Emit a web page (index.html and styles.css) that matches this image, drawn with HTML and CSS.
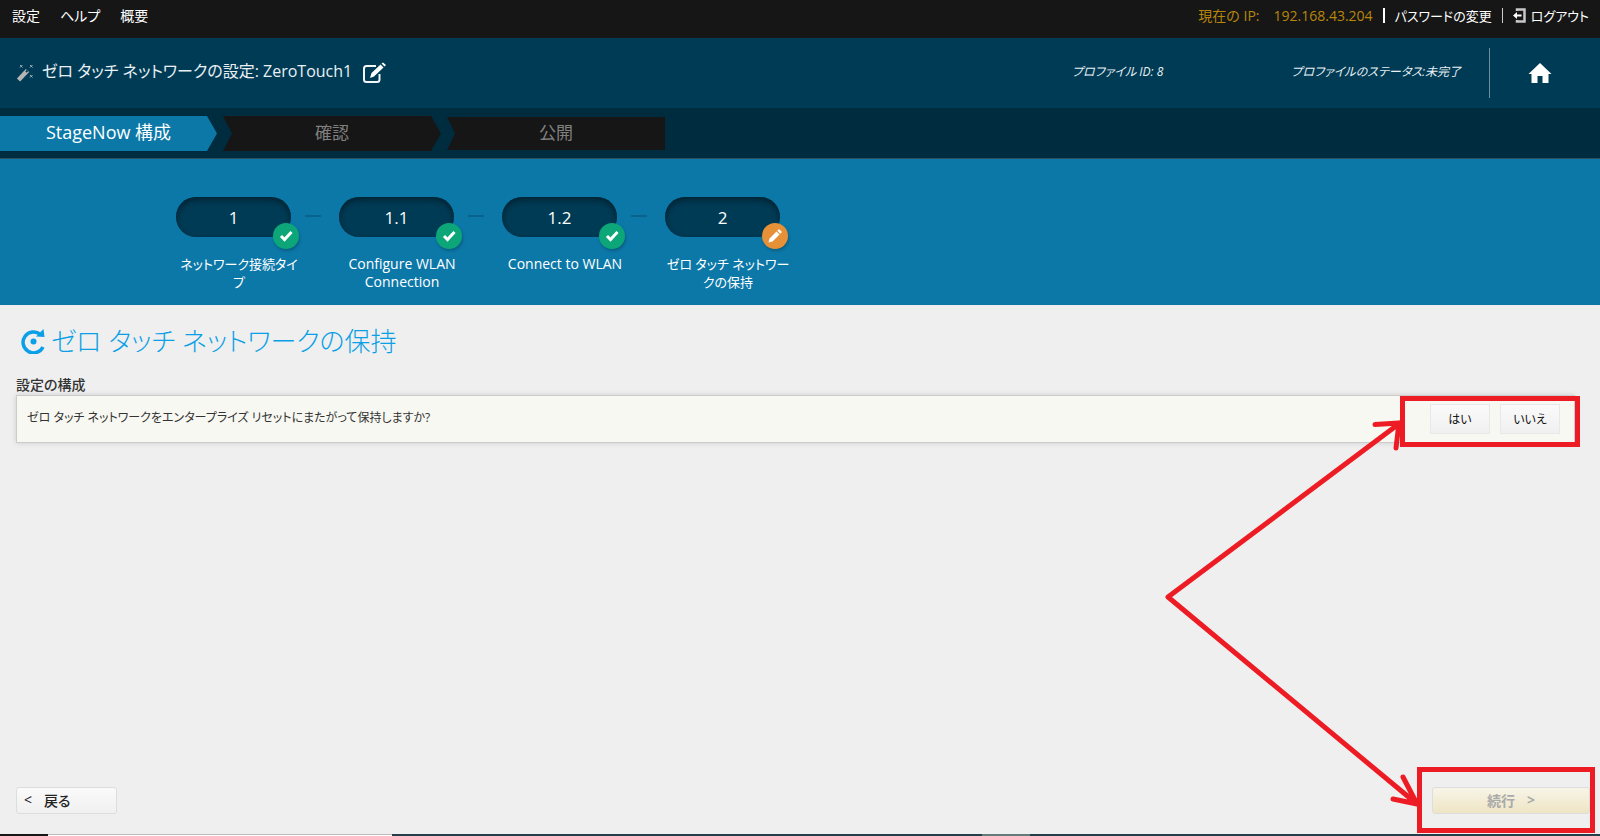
FILE: index.html
```html
<!DOCTYPE html>
<html lang="ja">
<head>
<meta charset="utf-8">
<title>StageNow</title>
<link rel="stylesheet" href="styles.css">
</head>
<body>
<header class="topbar">
  <nav class="menu">
    <a href="#">設定</a>
    <a href="#">ヘルプ</a>
    <a href="#">概要</a>
  </nav>
  <div class="session">
    <span class="ip-label">現在の IP:</span>
    <span class="ip">192.168.43.204</span>
    <span class="bar bar-bold"></span>
    <a class="session-link" href="#">パスワードの変更</a>
    <span class="bar"></span>
    <a href="#" class="session-link logout">
      <svg width="13" height="15" viewBox="0 0 13 15" aria-hidden="true"><path d="M4 3V1.500H11.500V13.500H4V12" fill="none" stroke="#c8c8c8" stroke-width="2.500"/><path d="M0 7.500L4 4V6.500H8.500V8.500H4V11Z" fill="#fff"/></svg>
      <span>ログアウト</span>
    </a>
  </div>
</header>

<section class="profile">
  <h1 class="profile-name">
    <svg class="wand" width="18" height="18" viewBox="0 0 18 18" aria-hidden="true"><path d="M2.500 16L11.500 6.500" stroke="#b5b5b5" stroke-width="4.500" stroke-linecap="butt"/><path d="M10 8L11.500 6.500" stroke="#003b55" stroke-width="2"/><path d="M4 1l2.500 2.500m0-2.500L4 3.500M14 1l2.500 2.500m0-2.500l-2.500 2.500M14 11l2.500 2.500m0-2.500l-2.500 2.500" stroke="#a3b3bb" stroke-width="1"/></svg>
    <span>ゼロ タッチ ネットワークの設定: ZeroTouch1</span>
  </h1>
  <button class="icon-button" type="button" aria-label="名前の編集">
    <svg width="24" height="22" viewBox="0 0 24 22" aria-hidden="true"><path d="M14 4H4.500Q2 4 2 6.500V17.500Q2 20 4.500 20H15Q17.500 20 17.500 17.500V12" fill="none" stroke="#f2f6f8" stroke-width="2"/><path d="M8 16L9.500 11L18.500 2.500L21.500 5.500L12 14.500Z" fill="#fff"/><path d="M19.500 1.500L21 0.500L24 3L22.500 4.500Z" fill="#fff"/></svg>
  </button>
  <span class="profile-id">プロファイル ID: 8</span>
  <span class="profile-status">プロファイルのステータス:未完了</span>
  <a class="home" href="#" aria-label="ホーム">
    <svg width="24" height="22" viewBox="0 0 24 22" aria-hidden="true"><path d="M12 1L23.500 12H20.500V21H14.500V14H9.500V21H3.500V12H0.500Z" fill="#fff"/></svg>
  </a>
</section>

<nav class="stages">
  <a class="stage stage-active" href="#">StageNow 構成</a>
  <a class="stage stage-mid" href="#">確認</a>
  <a class="stage stage-last" href="#">公開</a>
</nav>

<ol class="steps">
  <li class="step">
    <button class="pill" type="button">1</button>
    <span class="badge"><svg width="14" height="12" viewBox="0 0 14 12" aria-hidden="true"><path d="M2 6L5.500 9.500L12.500 2" fill="none" stroke="#fff" stroke-width="3"/></svg></span>
    <span class="step-label">ネットワーク接続タイプ</span>
  </li>
  <li class="step">
    <button class="pill" type="button">1.1</button>
    <span class="badge"><svg width="14" height="12" viewBox="0 0 14 12" aria-hidden="true"><path d="M2 6L5.500 9.500L12.500 2" fill="none" stroke="#fff" stroke-width="3"/></svg></span>
    <span class="step-label step-label-latin">Configure WLAN Connection</span>
  </li>
  <li class="step">
    <button class="pill" type="button">1.2</button>
    <span class="badge"><svg width="14" height="12" viewBox="0 0 14 12" aria-hidden="true"><path d="M2 6L5.500 9.500L12.500 2" fill="none" stroke="#fff" stroke-width="3"/></svg></span>
    <span class="step-label step-label-latin">Connect to WLAN</span>
  </li>
  <li class="step">
    <button class="pill" type="button">2</button>
    <span class="badge badge-edit"><svg width="14" height="14" viewBox="0 0 14 14" aria-hidden="true"><path d="M0.500 13.500L1.500 9.500L8.500 2.500L11.500 5.500L4.500 12.500Z M9.300 1.700L10.500 0.500Q11 0 11.500 0.500L13.500 2.500Q14 3 13.500 3.500L12.300 4.700Z" fill="#fff"/></svg></span>
    <span class="step-label">ゼロ タッチ ネットワークの保持</span>
  </li>
</ol>

<main class="content">
  <h2 class="title">
    <svg width="26" height="26" viewBox="0 0 26 26" aria-hidden="true"><path d="M20.500 6.500A10.500 10.500 0 1 0 23 19" fill="none" stroke="#0a9fe6" stroke-width="3.500"/><path d="M16 8.500L23.500 1L24.500 9Z" fill="#0a9fe6"/><circle cx="13.500" cy="13.500" r="3" fill="#0a9fe6"/></svg>
    <span>ゼロ タッチ ネットワークの保持</span>
  </h2>
  <h3 class="group">設定の構成</h3>
  <div class="question">
    <p class="question-text">ゼロ タッチ ネットワークをエンタープライズ リセットにまたがって保持しますか?</p>
    <button class="choice" type="button">はい</button>
    <button class="choice" type="button">いいえ</button>
  </div>
  <footer class="actions">
    <button class="action back" type="button"><span>&lt;</span><span>戻る</span></button>
    <button class="action next" type="button" disabled><span>続行</span><span>&gt;</span></button>
  </footer>
</main>
<div class="taskbar"><span class="task-start"></span><span class="task-search"></span><span class="task-gap"></span><span class="task-app"></span></div>

<svg class="annotations" width="460" height="456" viewBox="0 0 460 456" aria-hidden="true">
  <g fill="none" stroke="#ed1c24" stroke-width="5">
    <rect x="262.500" y="18.500" width="175" height="46"/>
    <rect x="279.500" y="389.500" width="173" height="61"/>
    <path d="M260 43L28 217L277 424M235 44.500L259 43L256 68M263 397L277 424L253 419" stroke-linecap="round" stroke-linejoin="round"/>
  </g>
</svg>
</body>
</html>
```
FILE: styles.css
```css
* { box-sizing: border-box; }

body {
  margin: 0;
  min-height: 100vh;
  position: relative;
  display: flex;
  flex-direction: column;
  background: #efefef;
  color: #333;
  font-family: "Open Sans", "Noto Sans CJK JP", sans-serif;
  font-size: 14px;
  font-feature-settings: "palt";
}

h1, h2, h3, p, ol { margin: 0; padding: 0; font-weight: 400; }
a { color: inherit; text-decoration: none; }
button { font: inherit; font-feature-settings: inherit; color: inherit; padding: 0; }
svg { display: block; flex: none; }

.topbar {
  height: 38px;
  padding: 0 11px 8px 12px;
  display: flex;
  align-items: center;
  justify-content: space-between;
  background: #161616;
  color: #fff;
}
.menu { display: flex; gap: 20px; }
.session { display: flex; align-items: center; }
.session-link { font-size: 13px; }
.ip-label, .ip { color: #b8860b; }
.ip-label { margin-right: 14px; }
.bar { width: 1px; height: 15px; margin: 0 10px; background: #ccc; }
.bar-bold { width: 2px; background: #fff; }
.logout { display: flex; align-items: center; gap: 5px; }

.profile {
  height: 70px;
  padding-left: 16px;
  display: flex;
  align-items: center;
  background: #003b55;
  color: #e8f0f4;
}
.profile-name { display: flex; align-items: center; gap: 8px; font-size: 16px; line-height: 20px; }
.profile-name span { padding-bottom: 4px; }
.icon-button { margin-left: 10px; border: 0; background: none; }
.profile-id { margin-left: auto; padding-bottom: 4px; font-size: 12px; font-style: italic; }
.profile-status { margin-left: 128px; padding-bottom: 4px; font-size: 12px; font-style: italic; }
.home {
  width: 111px;
  height: 50px;
  margin-left: 28px;
  padding-right: 10px;
  display: flex;
  align-items: center;
  justify-content: center;
  border-left: 1px solid #6d8f9f;
}

.stages {
  height: 51px;
  padding-top: 8px;
  display: flex;
  gap: 6px;
  background: #002c3f;
  border-bottom: 1px solid #2f5061;
}
.stage {
  width: 218px;
  height: 35px;
  text-align: center;
  font-size: 17px;
  line-height: 33px;
  background: #161616;
  color: #808080;
}
.stage-active {
  width: 217px;
  background: #0c78a8;
  color: #fff;
  font-size: 18px;
  clip-path: polygon(0 0, 207px 0, 100% 50%, 207px 100%, 0 100%);
}
.stage-mid { clip-path: polygon(0 0, 208px 0, 100% 50%, 208px 100%, 0 100%, 9px 50%); }
.stage-last { clip-path: polygon(0 1px, 100% 1px, 100% 34px, 0 34px, 8px 50%); }

.steps {
  height: 146px;
  padding: 38px 0 0 176px;
  display: flex;
  gap: 48px;
  list-style: none;
  background: #0c78a8;
  color: #fff;
}
.step { position: relative; width: 115px; }
.step:not(:last-child)::after {
  content: "";
  position: absolute;
  left: 129px;
  top: 18px;
  width: 16px;
  height: 2px;
  background: #09648d;
}
.pill {
  display: block;
  width: 115px;
  height: 40px;
  border: 0;
  border-radius: 20px;
  background: #003b55;
  box-shadow: inset 0 3px 6px #002230;
  font-size: 17px;
}
.badge {
  position: absolute;
  left: 97px;
  top: 26px;
  width: 26px;
  height: 26px;
  display: flex;
  align-items: center;
  justify-content: center;
  border-radius: 50%;
  background: #0ca678;
  box-shadow: 1px 2px 3px #0a5f85;
}
.badge-edit { background: #e69138; }
.step-label {
  display: block;
  width: 126px;
  margin-top: 18px;
  text-align: center;
  font-size: 13px;
  line-height: 18px;
}
.step-label-latin { font-size: 14px; }

.content {
  flex: 1;
  padding: 16px 4px 20px 16px;
  display: flex;
  flex-direction: column;
}
.title {
  padding-left: 4px;
  display: flex;
  align-items: center;
  gap: 5px;
  line-height: 40px;
  font-size: 26px;
  font-weight: 300;
  color: #0a9fe6;
}
.group { margin-top: 14px; font-size: 14px; font-weight: 500; line-height: 20px; }
.question {
  height: 48px;
  margin-right: 21px;
  padding-right: 14px;
  display: flex;
  gap: 10px;
  align-items: center;
  border: 1px solid #ccc;
  background: #f7f8f1;
  box-shadow: 0 0 5px #ccc;
}
.question-text { flex: 1; padding: 0 0 4px 10px; font-size: 12px; }
.choice {
  width: 60px;
  height: 30px;
  border: 1px solid #e8e8e8;
  background: linear-gradient(#fafafa, #f0f0f0);
  font-size: 12px;
  color: #111;
}
.actions { margin-top: auto; display: flex; justify-content: space-between; }
.action {
  height: 27px;
  padding-bottom: 2px;
  display: flex;
  align-items: center;
  gap: 12px;
  border: 1px solid #ddd;
  border-radius: 3px;
  font-weight: 500;
}
.back { width: 101px; padding-left: 7px; background: linear-gradient(#fafafa, #f0f0f0); color: #222; }
.next {
  width: 158px;
  margin-right: 6px;
  justify-content: center;
  background: linear-gradient(#f8f5e8, #eee5c4);
  color: #aaa;
  font-weight: 700;
}

.taskbar { height: 2px; display: flex; background: #243f49; }
.task-start { width: 48px; background: #161616; }
.task-search { width: 344px; background: #fff; border-top: 1px solid #bbb; }
.task-gap { width: 590px; }
.task-app { width: 48px; background: #667a7c; }

.annotations { position: absolute; right: 0; bottom: 0; pointer-events: none; }
```
